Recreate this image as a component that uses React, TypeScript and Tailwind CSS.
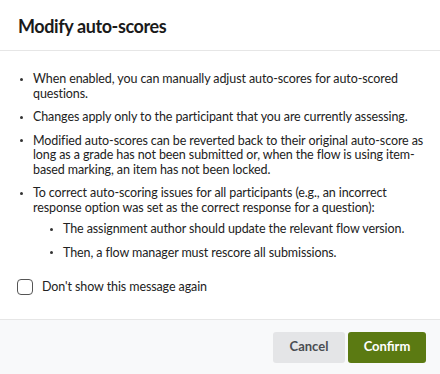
import { useState } from 'react'

// lines are split as in the original dialog so the wrap matches
const items: string[][] = [
  ['When enabled, you can manually adjust auto-scores for auto-scored', 'questions.'],
  ['Changes apply only to the participant that you are currently assessing.'],
  [
    'Modified auto-scores can be reverted back to their original auto-score as',
    'long as a grade has not been submitted or, when the flow is using item-',
    'based marking, an item has not been locked.',
  ],
]

const subItems = [
  'The assignment author should update the relevant flow version.',
  'Then, a flow manager must rescore all submissions.',
]

function Lines({ lines }: { lines: string[] }) {
  return (
    <span className="flex flex-col">
      {lines.map(l => (
        <span key={l} className="whitespace-nowrap">
          {l}
        </span>
      ))}
    </span>
  )
}

function Dot() {
  return (
    <span className="h-[14.5px] flex items-center shrink-0">
      <span className="w-[3px] h-[3px] rounded-full bg-[#333]" />
    </span>
  )
}

export default function App() {
  const [dontShow, setDontShow] = useState(false)

  return (
    <div className="w-[440px] h-[374px] bg-white flex flex-col text-[#222] font-['Lato','Noto_Sans',sans-serif] overflow-hidden">
      <div className="h-[51px] shrink-0 border-b border-[#e6e6e6] px-[18px] flex items-center">
        <h2 className="text-[18px] font-bold tracking-[-0.4px] text-[#1a1a1a] pt-[2px]">Modify auto-scores</h2>
      </div>

      <div className="flex-1 px-[18px] pt-[21px]">
        <ul className="flex flex-col gap-[9px] text-[12.5px] leading-[14.5px] tracking-[-0.1px]">
          {items.map(lines => (
            <li key={lines[0]} className="flex gap-[10px] pl-[2px]">
              <Dot />
              <Lines lines={lines} />
            </li>
          ))}
          <li className="flex gap-[10px] pl-[2px]">
            <Dot />
            <div className="flex flex-col gap-[7px]">
              <Lines
                lines={[
                  'To correct auto-scoring issues for all participants (e.g., an incorrect',
                  'response option was set as the correct response for a question):',
                ]}
              />
              <ul className="flex flex-col gap-[9px] pl-[17px]">
                {subItems.map(text => (
                  <li key={text} className="flex gap-[10px]">
                    <Dot />
                    <span className="whitespace-nowrap">{text}</span>
                  </li>
                ))}
              </ul>
            </div>
          </li>
        </ul>

        <label className="mt-[18px] flex items-center gap-[9px] text-[12.5px] tracking-[-0.1px] cursor-pointer">
          <input
            type="checkbox"
            checked={dontShow}
            onChange={e => setDontShow(e.target.checked)}
            className="appearance-none w-[16px] h-[16px] rounded-[4px] border border-[#555] bg-white checked:bg-[#5b7a12] checked:border-[#5b7a12] -ml-[1px]"
          />
          <span>Don't show this message again</span>
        </label>
      </div>

      <div className="h-[55px] shrink-0 border-t border-[#e6e6e6] bg-[#f8f9fa] px-[14px] flex items-center justify-end gap-[3px]">
        <button className="h-[31px] w-[72px] rounded-[3px] bg-[#e4e5e7] text-[#4a4d52] text-[13px] font-bold">
          Cancel
        </button>
        <button className="h-[31px] w-[78px] rounded-[3px] bg-[#5b7a12] text-white text-[13px] font-bold">
          Confirm
        </button>
      </div>
    </div>
  )
}
